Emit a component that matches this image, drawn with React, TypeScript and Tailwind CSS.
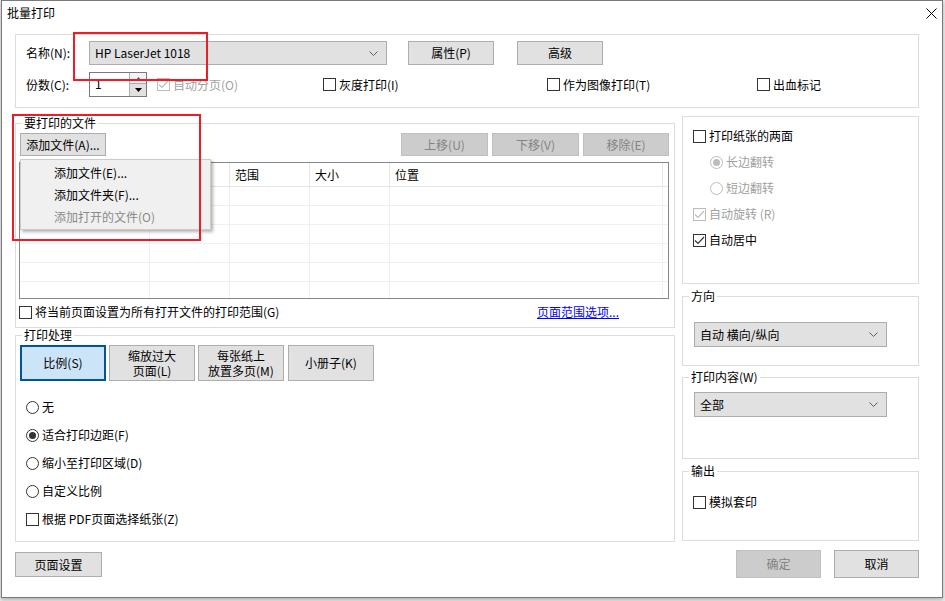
import React from "react";

type Kids = { children?: React.ReactNode };

const Check = ({ checked, disabled }: { checked?: boolean; disabled?: boolean }) => (
  <span
    className={`w-[13px] h-[13px] shrink-0 border bg-white flex items-center justify-center ${
      disabled ? "border-[#bcbcbc]" : "border-[#333333]"
    }`}
  >
    {checked && (
      <svg width="11" height="9" viewBox="0 0 11 9">
        <path d="M1 4.5 L4 7.5 L10 1" fill="none" stroke={disabled ? "#bcbcbc" : "#333333"} strokeWidth="1.2" />
      </svg>
    )}
  </span>
);

const Radio = ({ checked, disabled }: { checked?: boolean; disabled?: boolean }) => (
  <span
    className={`w-[13px] h-[13px] shrink-0 rounded-full border bg-white flex items-center justify-center ${
      disabled ? "border-[#bcbcbc]" : "border-[#333333]"
    }`}
  >
    {checked && (
      <span className={`w-[7px] h-[7px] rounded-full ${disabled ? "bg-[#bcbcbc]" : "bg-[#333333]"}`} />
    )}
  </span>
);

const CheckItem = ({ label, checked, disabled }: { label: string; checked?: boolean; disabled?: boolean }) => (
  <div className="flex items-center gap-[3px] h-[16px]">
    <Check checked={checked} disabled={disabled} />
    <span className={disabled ? "text-[#a0a0a0]" : "text-black"}>{label}</span>
  </div>
);

const RadioItem = ({ label, checked, disabled }: { label: string; checked?: boolean; disabled?: boolean }) => (
  <div className="flex items-center gap-[3px] h-[16px]">
    <Radio checked={checked} disabled={disabled} />
    <span className={disabled ? "text-[#a0a0a0]" : "text-black"}>{label}</span>
  </div>
);

const Btn = ({ children, disabled, className = "" }: Kids & { disabled?: boolean; className?: string }) => (
  <div
    className={`flex items-center justify-center border ${
      disabled ? "bg-[#cccccc] border-[#bfbfbf] text-[#838383]" : "bg-[#e1e1e1] border-[#adadad] text-black"
    } ${className}`}
  >
    {children}
  </div>
);

const Chevron = () => (
  <svg width="9" height="5" viewBox="0 0 9 5" className="shrink-0">
    <path d="M0.5 0.5 L4.5 4.5 L8.5 0.5" fill="none" stroke="#606060" strokeWidth="1" />
  </svg>
);

const Select = ({ value, className = "" }: { value: string; className?: string }) => (
  <div className={`flex items-center justify-between bg-[#e1e1e1] border border-[#adadad] pl-[5px] pr-[8px] ${className}`}>
    <span>{value}</span>
    <Chevron />
  </div>
);

// fieldset keeps no padding so the legend sits at the same spot in every group
const Group = ({
  title,
  className = "",
  inner = "",
  children,
}: Kids & { title: string; className?: string; inner?: string }) => (
  <fieldset className={`border border-[#dcdcdc] ${className}`}>
    <legend className="ml-[6px] px-[2px] leading-[14px]">{title}</legend>
    <div className={inner}>{children}</div>
  </fieldset>
);

const cols = [130, 80, 80, 80, 273];
const heads = ["文件名称", "页数", "范围", "大小", "位置"];

export default function App() {
  return (
    <div className="relative w-[945px] h-[601px] bg-[#ececec] overflow-hidden font-['Microsoft_YaHei','Noto_Sans_CJK_SC',sans-serif] text-[12px] text-black">
      <div className="ml-[1px] w-[942px] h-[598px] border border-[#7a7a7a] bg-white flex flex-col shadow-[0_2px_4px_rgba(0,0,0,0.25)]">
        {/* title */}
        <div className="h-[24px] flex items-center justify-between pl-[5px] pr-[5px] shrink-0">
          <span className="text-[12px]">批量打印</span>
          <svg width="11" height="11" viewBox="0 0 11 11">
            <path d="M0.5 0.5 L10.5 10.5 M10.5 0.5 L0.5 10.5" stroke="#000" strokeWidth="1" />
          </svg>
        </div>

        <div className="pl-[13px] pt-[9px] flex flex-col">
          {/* printer */}
          <div className="w-[904px] h-[74px] border border-[#dcdcdc] pl-[10px] pt-[6px] flex flex-col">
            <div className="flex items-center h-[24px]">
              <span className="w-[63px]">名称(N):</span>
              <Select value="HP LaserJet 1018" className="w-[298px] h-[24px]" />
              <Btn className="ml-[21px] w-[86px] h-[24px]">属性(P)</Btn>
              <Btn className="ml-[23px] w-[86px] h-[24px]">高级</Btn>
            </div>
            <div className="flex items-center h-[25px] mt-[7px]">
              <span className="w-[63px]">份数(C):</span>
              <div className="w-[58px] h-[25px] flex border border-[#7a7a7a]">
                <div className="flex-1 pl-[5px] leading-[22px]">1</div>
                <div className="w-[17px] flex flex-col border-l border-[#adadad]">
                  <div className="h-[11px] bg-[#f3f3f3] border-b border-[#adadad] flex items-center justify-center">
                    <svg width="5" height="3" viewBox="0 0 5 3"><path d="M0 3 L2.5 0 L5 3 Z" fill="#555" /></svg>
                  </div>
                  <div className="flex-1 bg-[#e1e1e1] flex items-center justify-center">
                    <svg width="7" height="4" viewBox="0 0 7 4"><path d="M0 0 L3.5 4 L7 0 Z" fill="#000" /></svg>
                  </div>
                </div>
              </div>
              <div className="ml-[10px] w-[166px]">
                <CheckItem label="自动分页(O)" checked disabled />
              </div>
              <div className="w-[224px]">
                <CheckItem label="灰度打印(I)" />
              </div>
              <div className="w-[210px]">
                <CheckItem label="作为图像打印(T)" />
              </div>
              <CheckItem label="出血标记" />
            </div>
          </div>

          <div className="flex mt-[8px] gap-[7px]">
            {/* left column */}
            <div className="w-[660px] flex flex-col">
              <Group title="要打印的文件" className="h-[212px]" inner="pl-[4px] pr-[5px]">
                <div className="flex justify-between pt-[3px]">
                  <Btn className="w-[86px] h-[23px]">添加文件(A)...</Btn>
                  <div className="flex gap-[4px]">
                    <Btn disabled className="w-[87px] h-[23px]">上移(U)</Btn>
                    <Btn disabled className="w-[87px] h-[23px]">下移(V)</Btn>
                    <Btn disabled className="w-[86px] h-[23px]">移除(E)</Btn>
                  </div>
                </div>
                <div className="mt-[6px] -ml-[1px] w-[650px] h-[137px] border border-[#828790] overflow-hidden">
                  <div className="flex h-[24px] border-b border-[#e5e5e5]">
                    {cols.map((w, i) => (
                      <div
                        key={i}
                        style={{ width: w }}
                        className="shrink-0 border-r border-[#e5e5e5] pl-[5px] leading-[23px]"
                      >
                        {heads[i]}
                      </div>
                    ))}
                  </div>
                  {[0, 1, 2, 3, 4, 5].map((r) => (
                    <div key={r} className="flex h-[19px] border-b border-[#f0f0f0]">
                      {cols.map((w, i) => (
                        <div key={i} style={{ width: w }} className="shrink-0 border-r border-[#f0f0f0]" />
                      ))}
                    </div>
                  ))}
                </div>
                <div className="mt-[4px] -ml-[1px] w-[600px] flex items-center justify-between">
                  <CheckItem label="将当前页面设置为所有打开文件的打印范围(G)" />
                  <span className="text-[#0000ff] underline">页面范围选项...</span>
                </div>
              </Group>

              <Group title="打印处理" className="h-[214px]" inner="pl-[4px]">
                <div className="flex pt-[3px]">
                  <div className="w-[86px] h-[36px] bg-[#cce4f7] border-2 border-[#005499] flex items-center justify-center">
                    比例(S)
                  </div>
                  <Btn className="ml-[3px] w-[86px] h-[36px] flex-col">
                    <span className="leading-[15px]">缩放过大</span>
                    <span className="leading-[15px]">页面(L)</span>
                  </Btn>
                  <Btn className="ml-[3px] w-[86px] h-[36px] flex-col">
                    <span className="leading-[15px]">每张纸上</span>
                    <span className="leading-[15px]">放置多页(M)</span>
                  </Btn>
                  <Btn className="ml-[4px] w-[86px] h-[36px]">小册子(K)</Btn>
                </div>
                <div className="flex flex-col gap-[12px] pl-[6px] mt-[18px]">
                  <RadioItem label="无" />
                  <RadioItem label="适合打印边距(F)" checked />
                  <RadioItem label="缩小至打印区域(D)" />
                  <RadioItem label="自定义比例" />
                  <CheckItem label="根据 PDF页面选择纸张(Z)" />
                </div>
              </Group>
            </div>

            {/* right column */}
            <div className="w-[237px] flex flex-col">
              <div className="h-[168px] border border-[#dcdcdc] pl-[10px] pt-[11px] flex flex-col gap-[10px]">
                <CheckItem label="打印纸张的两面" />
                <div className="pl-[17px]">
                  <RadioItem label="长边翻转" checked disabled />
                </div>
                <div className="pl-[17px]">
                  <RadioItem label="短边翻转" disabled />
                </div>
                <CheckItem label="自动旋转 (R)" checked disabled />
                <CheckItem label="自动居中" checked />
              </div>

              <Group title="方向" className="mt-[5px] h-[77px]" inner="pl-[11px]">
                <Select value="自动 横向/纵向" className="mt-[19px] w-[193px] h-[25px]" />
              </Group>

              <Group title="打印内容(W)" className="mt-[4px] h-[89px]" inner="pl-[11px]">
                <Select value="全部" className="mt-[8px] w-[193px] h-[25px]" />
              </Group>

              <Group title="输出" className="mt-[5px] h-[77px]" inner="pl-[10px]">
                <div className="mt-[16px]">
                  <CheckItem label="模拟套印" />
                </div>
              </Group>
            </div>
          </div>

          <div className="flex items-start mt-[8px] w-[904px]">
            <Btn className="mt-[2px] w-[87px] h-[25px]">页面设置</Btn>
            <Btn disabled className="ml-auto w-[85px] h-[28px]">确定</Btn>
            <Btn className="ml-[13px] w-[85px] h-[28px]">取消</Btn>
          </div>
        </div>
      </div>

      {/* popup menu */}
      <div className="absolute left-[20px] top-[159px] w-[191px] h-[71px] bg-[#f0f0f0] border border-[#cccccc] shadow-[2px_2px_3px_rgba(0,0,0,0.3)] pt-[2px]">
        <div className="h-[22px] pl-[33px] leading-[22px]">添加文件(E)...</div>
        <div className="h-[22px] pl-[33px] leading-[22px]">添加文件夹(F)...</div>
        <div className="h-[22px] pl-[33px] leading-[22px] text-[#8a8a8a]">添加打开的文件(O)</div>
      </div>

      {/* red annotation boxes */}
      <div className="absolute left-[73px] top-[32px] w-[135px] h-[49px] border-2 border-[#ee1c24]" />
      <div className="absolute left-[12px] top-[114px] w-[189px] h-[127px] border-2 border-[#ee1c24]" />
    </div>
  );
}
